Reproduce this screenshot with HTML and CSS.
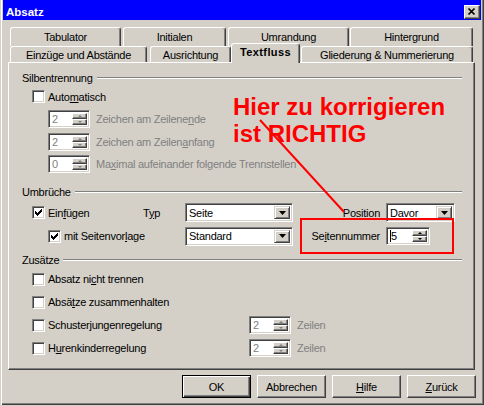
FILE: index.html
```html
<!DOCTYPE html>
<html lang="de">
<head>
<meta charset="utf-8">
<title>Absatz</title>
<link rel="stylesheet" href="styles.css">
</head>
<body>
<div class="window">
  <div class="titlebar">
    <span class="title">Absatz</span>
    <span class="close"><svg width="14" height="12" viewBox="0 0 14 12"><path d="M3.5 2.5l6 6M9.5 2.5l-6 6" stroke="#000" stroke-width="1.7" fill="none"/></svg></span>
  </div>

  <div class="tabs">
    <div class="tabrow back">
      <div class="tab w-tab">Tabulator</div>
      <div class="tab w-ini">Initialen</div>
      <div class="tab w-umr">Umrandung</div>
      <div class="tab w-hin">Hintergrund</div>
    </div>
    <div class="tabrow front">
      <div class="tab w-ein">Einzüge und Abstände</div>
      <div class="tab w-aus">Ausrichtung</div>
      <div class="tab sel w-txt">Textfluss</div>
      <div class="tab w-gli">Gliederung &amp; Nummerierung</div>
    </div>
  </div>

  <div class="panel">
    <!-- Silbentrennung -->
    <div class="legend l-silb"><span>Silbentrennung</span><i class="rule"></i></div>
    <div class="row in1 r-auto"><span class="check"></span><span>Auto<u>m</u>atisch</span></div>
    <div class="row in2 r-s1">
      <span class="spin dis"><span class="val">2</span><span class="btns"><b class="up"></b><b class="dn"></b></span></span>
      <span class="lbl dim">Zeichen am Zeilene<u>n</u>de</span>
    </div>
    <div class="row in2 r-s2">
      <span class="spin dis"><span class="val">2</span><span class="btns"><b class="up"></b><b class="dn"></b></span></span>
      <span class="lbl dim">Zeichen am Zeilen<u>a</u>nfang</span>
    </div>
    <div class="row in2 r-s3">
      <span class="spin dis"><span class="val">0</span><span class="btns"><b class="up"></b><b class="dn"></b></span></span>
      <span class="lbl dim">Ma<u>x</u>imal aufeinander folgende Trennstellen</span>
    </div>

    <!-- Umbrüche -->
    <div class="legend l-umb"><span>Umbrüche</span><i class="rule"></i></div>
    <div class="row in1 r-ein">
      <span class="check on"><svg width="9" height="9" viewBox="0 0 9 9"><path d="M1 3h1v3H1zM2 4h1v3H2zM3 5h1v3H3zM4 4h1v3H4zM5 3h1v3H5zM6 2h1v3H6zM7 1h1v3H7z" fill="#000"/></svg></span>
      <span class="w-einf">Ein<u>f</u>ügen</span>
      <span class="w-typ">T<u>y</u>p</span>
      <span class="select w-sel"><span class="val">Seite</span><span class="drop"><svg width="7" height="4" viewBox="0 0 7 4"><path d="M0 0h7L3.5 4z" fill="#000"/></svg></span></span>
      <span class="rlbl">Position</span>
      <span class="select w-davor"><span class="val">Davor</span><span class="drop"><svg width="7" height="4" viewBox="0 0 7 4"><path d="M0 0h7L3.5 4z" fill="#000"/></svg></span></span>
    </div>
    <div class="row in2 r-std">
      <span class="check on"><svg width="9" height="9" viewBox="0 0 9 9"><path d="M1 3h1v3H1zM2 4h1v3H2zM3 5h1v3H3zM4 4h1v3H4zM5 3h1v3H5zM6 2h1v3H6zM7 1h1v3H7z" fill="#000"/></svg></span>
      <span class="w-vor">mit Seitenvor<u>l</u>age</span>
      <span class="select w-sel"><span class="val">Standard</span><span class="drop"><svg width="7" height="4" viewBox="0 0 7 4"><path d="M0 0h7L3.5 4z" fill="#000"/></svg></span></span>
      <span class="rlbl">Se<u>i</u>tennummer</span>
      <span class="spin w-num"><span class="val"><i class="caret"></i>5</span><span class="btns"><b class="up"></b><b class="dn"></b></span></span>
    </div>

    <!-- Zusätze -->
    <div class="legend l-zus"><span>Zusätze</span><i class="rule"></i></div>
    <div class="row in1 r-z1"><span class="check"></span><span>Absatz ni<u>c</u>ht trennen</span></div>
    <div class="row in1 r-z"><span class="check"></span><span>Absä<u>t</u>ze zusammenhalten</span></div>
    <div class="row in1 r-z">
      <span class="check"></span><span class="w-zlbl">Schuster<u>j</u>ungenregelung</span>
      <span class="spin dis"><span class="val">2</span><span class="btns"><b class="up"></b><b class="dn"></b></span></span>
      <span class="lbl dim">Zeilen</span>
    </div>
    <div class="row in1 r-z">
      <span class="check"></span><span class="w-zlbl">H<u>u</u>renkinderregelung</span>
      <span class="spin dis"><span class="val">2</span><span class="btns"><b class="up"></b><b class="dn"></b></span></span>
      <span class="lbl dim">Zeilen</span>
    </div>
  </div>

  <div class="buttons">
    <span class="btn def">OK</span>
    <span class="btn">Abbrechen</span>
    <span class="btn"><u>H</u>ilfe</span>
    <span class="btn"><u>Z</u>urück</span>
  </div>

  <!-- red hand-drawn remark over the dialog -->
  <div class="note">Hier zu korrigieren<br>ist RICHTIG</div>
  <svg class="pointer" width="484" height="406" viewBox="0 0 484 406"><path d="M260 120L344 212" stroke="#f00" stroke-width="2" fill="none"/></svg>
  <div class="frame"></div>
</div>
</body>
</html>
```

FILE: styles.css
```css
* { box-sizing: border-box; }

body {
  margin: 0;
  width: 484px;
  height: 406px;
  overflow: hidden;
  background: #d4d0c8;
  font-family: "Liberation Sans", Arial, sans-serif;
  font-size: 11px;
  letter-spacing: -0.25px;
  color: #000;
}

u { text-decoration: underline; text-underline-offset: 1px; }

.window {
  position: relative;
  height: 405px;
  padding: 0 3px;
  background: #d4d0c8;
  box-shadow: inset 1px 0 #d4d0c8, inset 2px 0 #fff, inset -1px -1px #404040, inset -2px -2px #808080;
}

/* title bar */
.titlebar {
  height: 20px;
  padding: 4px 1px 0 3px;
  background: #0000ff;
  display: flex;
  align-items: center;
  justify-content: space-between;
}
.title {
  color: #fff;
  font-weight: bold;
  font-size: 11.5px;
  letter-spacing: 0;
}
.close {
  width: 16px;
  height: 14px;
  background: #d4d0c8;
  border: 1px solid;
  border-color: #fff #404040 #404040 #fff;
  box-shadow: inset -1px -1px #808080;
  display: flex;
  align-items: center;
  justify-content: center;
}

/* tabs */
.tabs { padding-left: 7px; margin-top: 7px; }
.tabrow { display: flex; }
.tabrow.back { height: 19px; }
.tabrow.front { height: 16px; }
.tab {
  height: 100%;
  flex: none;
  border-top: 1px solid #fff;
  border-left: 1px solid #fff;
  border-right: 1px solid #404040;
  box-shadow: inset -1px 0 #808080;
  border-radius: 3px 3px 0 0;
  display: flex;
  align-items: center;
  justify-content: center;
  background: #d4d0c8;
}
.tab.sel {
  position: relative;
  z-index: 1;
  margin-top: -3px;
  height: 20px;
  padding-bottom: 3px;
  font-weight: bold;
  letter-spacing: 0.4px;
}
.w-tab { width: 111px; margin-right: 2px; }
.w-ini { width: 103px; margin-right: 2px; }
.w-umr { width: 121px; margin-right: 1px; }
.w-hin { width: 123px; }
.w-ein { width: 137px; margin-right: 3px; }
.w-aus { width: 81px; }
.w-txt { width: 69px; margin-right: 1px; }
.w-gli { width: 172px; }

/* page of the tab */
.panel {
  margin-left: 5px;
  width: 467px;
  height: 308px;
  padding: 0 12px 0 13px;
  border: 1px solid;
  border-color: #fff #404040 #404040 #fff;
  box-shadow: inset -1px -1px #808080;
}

.legend { display: flex; align-items: center; height: 14px; }
.rule {
  flex: 1;
  height: 2px;
  margin-left: 4px;
  border-top: 1px solid #808080;
  border-bottom: 1px solid #fff;
}
.l-silb { margin-top: 8px; }
.l-umb { margin-top: 12px; }
.l-zus { margin-top: 7px; }

.row { display: flex; align-items: center; white-space: nowrap; }
.in1 { padding-left: 10px; }
.in2 { padding-left: 26px; }

.r-auto { height: 13px; margin-top: 5px; }
.r-s1 { height: 18px; margin-top: 7px; }
.r-s2 { height: 18px; margin-top: 5px; }
.r-s3 { height: 18px; margin-top: 4px; }
.r-ein { height: 19px; margin-top: 4px; }
.r-std { height: 20px; margin-top: 4px; }
.r-z1 { height: 18px; margin-top: 3px; }
.r-z { height: 18px; margin-top: 5px; }

.dim { color: #808080; }
.lbl { margin-left: 6px; }

.w-einf { width: 95px; }
.w-typ { width: 42px; }
.w-vor { width: 121px; }
.w-zlbl { width: 201px; }
.rlbl { width: 87px; margin-right: 6px; text-align: right; }

/* check boxes */
.check {
  flex: none;
  width: 13px;
  height: 13px;
  margin-right: 3px;
  background: #fff;
  border: 1px solid;
  border-color: #808080 #fff #fff #808080;
  box-shadow: inset 1px 1px #404040, inset -1px -1px #d4d0c8;
  display: flex;
  align-items: center;
  justify-content: center;
}
.check svg { display: block; }

/* spin fields */
.spin {
  flex: none;
  display: flex;
  width: 42px;
  height: 18px;
  padding: 2px;
  background: #fff;
  border: 1px solid;
  border-color: #808080 #fff #fff #808080;
  box-shadow: inset 1px 1px #404040, inset -1px -1px #d4d0c8;
}
.spin .val { flex: 1; padding-left: 1px; line-height: 13px; display: flex; align-items: center; }
.spin.dis .val { color: #808080; }
.w-num { width: 44px; }
.caret { display: inline-block; width: 1px; height: 12px; background: #000; margin-right: 0; }
.btns { width: 15px; display: flex; flex-direction: column; }
.btns b {
  flex: 1;
  background: #d4d0c8;
  border: 1px solid;
  border-color: #fff #404040 #404040 #fff;
  box-shadow: inset -1px -1px #808080;
  display: flex;
  align-items: center;
  justify-content: center;
}
.btns b::after {
  content: "";
  width: 0;
  height: 0;
  border-left: 2px solid transparent;
  border-right: 2px solid transparent;
}
.btns .up::after { border-bottom: 2px solid #000; }
.btns .dn::after { border-top: 2px solid #000; }
.spin.dis .btns .up::after { border-bottom-color: #808080; }
.spin.dis .btns .dn::after { border-top-color: #808080; }

/* drop-down lists */
.select {
  flex: none;
  display: flex;
  height: 19px;
  padding: 2px;
  background: #fff;
  border: 1px solid;
  border-color: #808080 #fff #fff #808080;
  box-shadow: inset 1px 1px #404040, inset -1px -1px #d4d0c8;
}
.select .val { flex: 1; padding-left: 1px; display: flex; align-items: center; }
.w-sel { width: 108px; }
.w-davor { width: 69px; }
.drop {
  width: 16px;
  background: #d4d0c8;
  border: 1px solid;
  border-color: #d4d0c8 #404040 #404040 #d4d0c8;
  box-shadow: inset 1px 1px #fff, inset -1px -1px #808080;
  display: flex;
  align-items: center;
  justify-content: center;
}
.drop svg { display: block; }

/* dialog buttons */
.buttons {
  display: flex;
  justify-content: flex-end;
  gap: 6px;
  margin-top: 5px;
  padding-right: 5px;
}
.btn {
  width: 69px;
  height: 23px;
  border: 1px solid;
  border-color: #fff #404040 #404040 #fff;
  box-shadow: inset -1px -1px #808080;
  display: flex;
  align-items: center;
  justify-content: center;
}
.btn.def {
  border-color: #000;
  box-shadow: inset 1px 1px #fff, inset -1px -1px #404040, inset -2px -2px #808080;
}

/* red remark */
.note {
  position: absolute;
  left: 233px;
  top: 93px;
  color: #f00;
  font-family: "Liberation Sans", Arial, sans-serif;
  font-weight: bold;
  font-size: 24px;
  line-height: 27px;
  letter-spacing: 0;
  white-space: nowrap;
}
.pointer { position: absolute; left: 0; top: 0; pointer-events: none; }
.frame {
  position: absolute;
  left: 300px;
  top: 218px;
  width: 154px;
  height: 36px;
  border: 2px solid #f00;
}
```
